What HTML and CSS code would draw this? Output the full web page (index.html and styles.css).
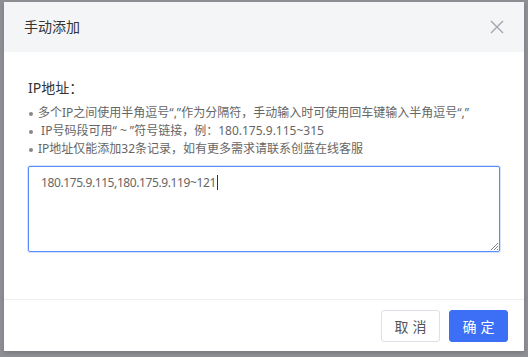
FILE: index.html
```html
<!DOCTYPE html>
<html lang="zh-CN">
<head>
<meta charset="utf-8">
<title>手动添加</title>
<link rel="stylesheet" href="styles.css">
</head>
<body>
<div class="backdrop">
  <div class="dialog">
    <div class="dialog-header">
      <span class="dialog-title">手动添加</span>
      <svg class="close" width="14" height="14" viewBox="0 0 14 14"><path d="M1 1 L13 13 M13 1 L1 13" stroke="#a3a6ad" stroke-width="1.4" fill="none"/></svg>
    </div>
    <div class="dialog-body">
      <div class="label">IP地址：</div>
      <ul class="tips">
        <li>多个IP之间使用半角逗号“,”作为分隔符，手动输入时可使用回车键输入半角逗号“,”</li>
        <li>&nbsp;IP号码段可用“ ~ ”符号链接，例：180.175.9.115~315</li>
        <li>IP地址仅能添加32条记录，如有更多需求请联系创蓝在线客服</li>
      </ul>
      <div class="textarea">
        <span class="value">180.175.9.115,180.175.9.119~121</span><span class="caret"></span>
        <svg class="grip" width="8" height="8" viewBox="0 0 8 8"><path d="M8 1 L1 8 M8 4 L4 8 M8 7 L7 8" stroke="#666" stroke-width="0.8" fill="none"/></svg>
      </div>
    </div>
    <div class="dialog-footer">
      <button class="btn btn-default">取消</button>
      <button class="btn btn-primary">确定</button>
    </div>
  </div>
</div>
</body>
</html>
```
FILE: styles.css
```css
html, body {
  margin: 0;
  padding: 0;
}
body {
  width: 528px;
  height: 357px;
  background: #8e8f95;
  font-family: "Noto Sans", "Noto Sans CJK SC", sans-serif;
  overflow: hidden;
}
.backdrop {
  padding: 2px 0 0 4px;
}
.dialog {
  position: relative;
  width: 520px;
  height: 349px;
  background: #fff;
  display: flex;
  flex-direction: column;
  box-shadow: 0 2px 4px rgba(0,0,0,0.15);
}
.dialog-header {
  height: 50px;
  background: #f4f5f7;
  display: flex;
  align-items: center;
  justify-content: space-between;
  padding: 0 20px 0 20px;
  box-sizing: border-box;
}
.dialog-title {
  font-size: 14px;
  color: #333;
  line-height: 20px;
}
.close {
  display: block;
}
.dialog-body {
  flex: 1;
  padding: 26px 24px 0 24px;
}
.label {
  font-size: 14px;
  color: #333;
  line-height: 20px;
  margin-bottom: 6px;
}
.tips {
  list-style: none;
  margin: 0;
  padding: 0;
  font-size: 12px;
  color: #666;
}
.tips li {
  position: relative;
  line-height: 18px;
  padding-left: 10px;
  white-space: nowrap;
}
.tips li::before {
  content: "";
  position: absolute;
  left: 1px;
  top: 8px;
  width: 4px;
  height: 4px;
  border-radius: 50%;
  background: #888;
}
.textarea {
  position: relative;
  margin-top: 8px;
  height: 86px;
  box-sizing: border-box;
  border: 1px solid #5b8efd;
  border-radius: 2px;
  box-shadow: 0 0 0 1px #d6e2fd;
  padding: 7px 12px;
  font-family: "Noto Sans", sans-serif;
  font-size: 12px;
  letter-spacing: -0.4px;
  color: #666;
  line-height: 18px;
  display: flex;
  align-items: flex-start;
}
.caret {
  display: inline-block;
  width: 1px;
  height: 15px;
  background: #333;
  margin-top: 1px;
  margin-left: 1px;
}
.grip {
  position: absolute;
  right: 1px;
  bottom: 1px;
}
.dialog-footer {
  border-top: 1px solid #ebedf0;
  height: 52px;
  box-sizing: border-box;
  display: flex;
  justify-content: flex-end;
  align-items: flex-start;
  gap: 9px;
  padding: 10px 16px 0 0;
}
.btn {
  width: 59px;
  height: 32px;
  border-radius: 3px;
  font-family: inherit;
  font-size: 14px;
  letter-spacing: 4px;
  text-indent: 4px;
  cursor: pointer;
  padding: 0;
}
.btn-default {
  background: #fff;
  border: 1px solid #dcdfe6;
  color: #555;
}
.btn-primary {
  background: #3c6ef6;
  border: 1px solid #3c6ef6;
  color: #fff;
}
```
